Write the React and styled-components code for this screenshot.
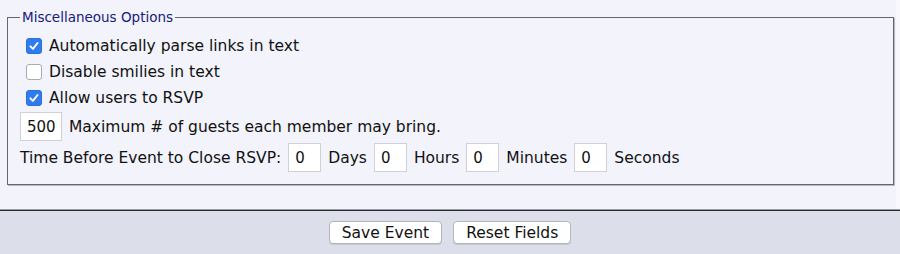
import React from "react";
import styled, { createGlobalStyle } from "styled-components";

const GlobalStyle = createGlobalStyle`
  html, body {
    margin: 0;
    padding: 0;
    background: #f9f9fd;
    font-family: "DejaVu Sans", Verdana, sans-serif;
    color: #111;
  }
`;

const Page = styled.div`
  width: 900px;
  height: 254px;
  display: flex;
  flex-direction: column;
  overflow: hidden;
`;

const Panel = styled.div`
  height: 209px;
  margin-right: 4px;
  background: #f2f3fb;
  padding-top: 9px;
  box-sizing: border-box;
`;

const Fieldset = styled.fieldset`
  margin: 0 2px 0 7px;
  padding: 9px 12px 12px 12px;
  border: 1px solid #666;
  box-shadow: 1px 1px 0 #b8b8c0;
  min-width: 0;
`;

const Legend = styled.legend`
  font-size: 13.5px;
  line-height: 16px;
  color: #17207a;
  padding: 0 2px;
`;

const Options = styled.div`
  display: flex;
  flex-direction: column;
  gap: 2px;
`;

const CheckRow = styled.label`
  display: flex;
  align-items: center;
  gap: 7px;
  height: 24px;
  padding-left: 6px;
  font-size: 15.5px;
`;

const Box = styled.span`
  width: 16px;
  height: 16px;
  box-sizing: border-box;
  border-radius: 3px;
  display: flex;
  align-items: center;
  justify-content: center;
  background: ${(p) => (p.$checked ? "#2f7cf0" : "#fff")};
  border: 1px solid ${(p) => (p.$checked ? "#2a6fd8" : "#a9a9b0")};
`;

const FieldRow = styled.div`
  display: flex;
  align-items: center;
  gap: 7px;
  height: 29px;
  font-size: 15.5px;
  white-space: nowrap;
`;

const NumInput = styled.input`
  width: ${(p) => p.$w}px;
  height: 29px;
  box-sizing: border-box;
  border: 1px solid #d0d0d6;
  background: #fff;
  padding: 0 0 0 6px;
  font: inherit;
  font-size: 15px;
  color: #111;
  outline: none;
`;

const Separator = styled.div`
  height: 2px;
  background: #2a2a2e;
  border-top: 1px solid #9a9aa2;
  box-sizing: border-box;
`;

const ButtonBar = styled.div`
  flex: 1;
  background: #dcdeea;
  display: flex;
  justify-content: center;
  align-items: flex-start;
  padding-top: 10px;
  gap: 11px;
`;

const Button = styled.button`
  height: 23px;
  padding: 0 12px;
  background: #fff;
  border: 1px solid #b4b4bc;
  border-radius: 4px;
  font-family: "DejaVu Sans", Verdana, sans-serif;
  font-size: 15.5px;
  color: #111;
  box-shadow: 0 1px 0 #c8c8d0;
`;

function Check({ checked }) {
  return (
    <Box $checked={checked}>
      {checked && (
        <svg width="12" height="12" viewBox="0 0 12 12">
          <path
            d="M2.4 6.3 L4.9 8.8 L9.6 3"
            fill="none"
            stroke="#fff"
            strokeWidth="1.9"
            strokeLinecap="round"
            strokeLinejoin="round"
          />
        </svg>
      )}
    </Box>
  );
}

export default function App() {
  return (
    <Page>
      <GlobalStyle />
      <Panel>
        <Fieldset>
          <Legend>Miscellaneous Options</Legend>
          <Options>
            <CheckRow>
              <Check checked />
              Automatically parse links in text
            </CheckRow>
            <CheckRow>
              <Check />
              Disable smilies in text
            </CheckRow>
            <CheckRow>
              <Check checked />
              Allow users to RSVP
            </CheckRow>
            <FieldRow>
              <NumInput $w={42} defaultValue="500" />
              Maximum # of guests each member may bring.
            </FieldRow>
            <FieldRow>
              Time Before Event to Close RSVP:
              <NumInput $w={33} defaultValue="0" />
              Days
              <NumInput $w={33} defaultValue="0" />
              Hours
              <NumInput $w={33} defaultValue="0" />
              Minutes
              <NumInput $w={33} defaultValue="0" />
              Seconds
            </FieldRow>
          </Options>
        </Fieldset>
      </Panel>
      <Separator />
      <ButtonBar>
        <Button>Save Event</Button>
        <Button>Reset Fields</Button>
      </ButtonBar>
    </Page>
  );
}
